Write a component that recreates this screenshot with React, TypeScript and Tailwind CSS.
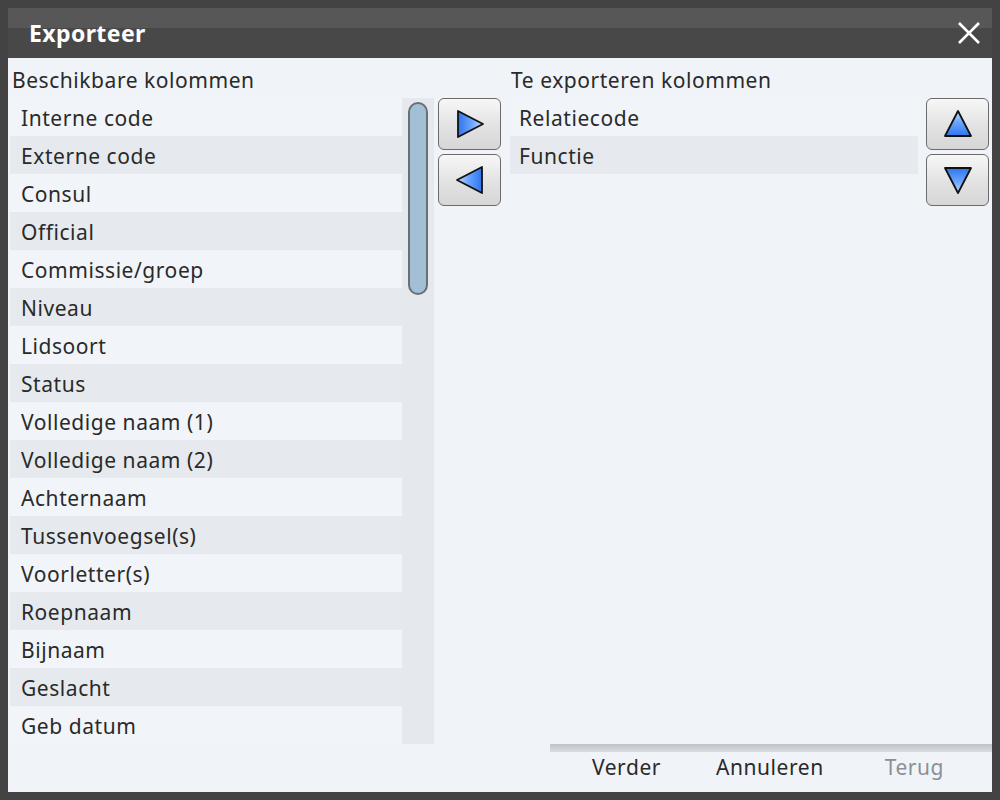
import React from "react";

const available = [
  "Interne code",
  "Externe code",
  "Consul",
  "Official",
  "Commissie/groep",
  "Niveau",
  "Lidsoort",
  "Status",
  "Volledige naam (1)",
  "Volledige naam (2)",
  "Achternaam",
  "Tussenvoegsel(s)",
  "Voorletter(s)",
  "Roepnaam",
  "Bijnaam",
  "Geslacht",
  "Geb datum",
];

const selected = ["Relatiecode", "Functie"];

type Dir = "right" | "left" | "up" | "down";

const Arrow = ({ dir }: { dir: Dir }) => {
  const id = `g-${dir}`;
  const points: Record<Dir, string> = {
    right: "3,2 28,15 3,28",
    left: "27,2 2,15 27,28",
    up: "2,27 15,2 28,27",
    down: "2,3 15,28 28,3",
  };
  const grad: Record<Dir, [string, string, string, string]> = {
    right: ["0", "0", "1", "0"],
    left: ["1", "0", "0", "0"],
    up: ["0", "1", "0", "0"],
    down: ["0", "0", "0", "1"],
  };
  const [x1, y1, x2, y2] = grad[dir];
  return (
    <svg width="30" height="30" viewBox="0 0 30 30">
      <defs>
        <linearGradient id={id} x1={x1} y1={y1} x2={x2} y2={y2}>
          <stop offset="0" stopColor="#2f74ee" />
          <stop offset="0.55" stopColor="#6aa6ff" />
          <stop offset="1" stopColor="#c4dcff" />
        </linearGradient>
      </defs>
      <polygon
        points={points[dir]}
        fill={`url(#${id})`}
        stroke="#111"
        strokeWidth="1.8"
        strokeLinejoin="round"
      />
    </svg>
  );
};

const ArrowButton = ({ dir }: { dir: Dir }) => (
  <button className="w-[63px] h-[52px] rounded-[6px] border border-[#6b6b6b] bg-[linear-gradient(#f7f7f7,#e2e2e2_55%,#d6d6d6)] flex items-center justify-center">
    <Arrow dir={dir} />
  </button>
);

const App = () => {
  return (
    <div
      className="w-[1000px] h-[800px] bg-[#434343] p-[8px] flex flex-col text-[#2a2a2a] text-[21px] tracking-[0.55px]"
      style={{ fontFamily: '"Noto Sans", "Open Sans", sans-serif' }}
    >
      <div className="h-[50px] bg-[linear-gradient(#575757_0,#575757_20px,#484848_20px)] flex items-center justify-between pl-[21px] pr-[11px]">
        <span className="text-white font-bold text-[23px] tracking-[0.4px] leading-none">Exporteer</span>
        <svg width="24" height="24" viewBox="0 0 24 24">
          <path d="M2 2 L22 22 M22 2 L2 22" stroke="#fff" strokeWidth="2.6" />
        </svg>
      </div>

      <div className="flex-1 bg-[#f0f4f8] flex flex-col">
        <div className="flex h-[686px]">
          <div className="w-[426px] pl-[2px] flex flex-col">
            <div className="h-[40px] flex items-center pl-[2px] pt-[6px]">
              Beschikbare kolommen
            </div>
            <div className="flex flex-1">
              <div className="w-[392px] flex flex-col">
                {available.map((name, i) => (
                  <div
                    key={name}
                    className={`h-[38px] flex items-center pl-[11px] pt-[3px] ${
                      i % 2 === 1 ? "bg-[#e6eaee]" : "bg-[#f1f5f9]"
                    }`}
                  >
                    {name}
                  </div>
                ))}
              </div>
              <div className="w-[32px] bg-[#e5e9ed] pt-[4px] pl-[6px]">
                <div className="w-[20px] h-[193px] rounded-full bg-[#a3bfd6] border-2 border-[#6a6f75]" />
              </div>
            </div>
          </div>

          <div className="w-[76px] flex flex-col gap-[4px] pt-[40px] pl-[4px]">
            <ArrowButton dir="right" />
            <ArrowButton dir="left" />
          </div>

          <div className="w-[416px] flex flex-col">
            <div className="h-[40px] flex items-center pl-[1px] pt-[6px]">
              Te exporteren kolommen
            </div>
            <div className="w-[408px] flex flex-col">
              {selected.map((name, i) => (
                <div
                  key={name}
                  className={`h-[38px] flex items-center pl-[9px] pt-[3px] ${
                    i % 2 === 1 ? "bg-[#e6eaee]" : "bg-[#f1f5f9]"
                  }`}
                >
                  {name}
                </div>
              ))}
            </div>
          </div>

          <div className="flex flex-col gap-[4px] pt-[40px]">
            <ArrowButton dir="up" />
            <ArrowButton dir="down" />
          </div>
        </div>

        <div className="flex-1 flex flex-col items-end">
          <div className="w-[442px] h-[8px] bg-[linear-gradient(#bfc3c7,#d9dde1)]" />
          <div className="w-[442px] flex-1 flex items-center pb-[8px]">
            <span className="ml-[42px]">Verder</span>
            <span className="ml-[55px]">Annuleren</span>
            <span className="ml-[61px] text-[#8a9096]">Terug</span>
          </div>
        </div>
      </div>
    </div>
  );
};

export default App;
